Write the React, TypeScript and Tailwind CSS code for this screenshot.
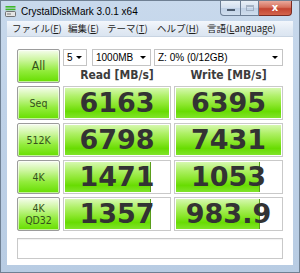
import React from 'react';

const cellFill =
  'bg-[linear-gradient(180deg,#d6f8b0_0%,#aef066_28%,#8ce72e_55%,#68dc02_78%,#80e42a_100%)]';
const btnFill =
  'bg-[linear-gradient(180deg,#f6fdee_0%,#cdf6a0_30%,#92ec3c_65%,#66de00_100%)]';

function Label({ children }: { children: React.ReactNode }) {
  return (
    <div
      className={`${btnFill} border border-[#9c9c9c] rounded-[2px] shadow-[inset_0_0_0_1px_rgba(255,255,255,0.6)] flex flex-col items-center justify-center text-[#35501c] text-[10.5px] leading-[12px] font-['DejaVu_Sans_Condensed','DejaVu_Sans',sans-serif]`}
    >
      {children}
    </div>
  );
}

function Cell({ value, pct }: { value: string; pct: number }) {
  return (
    <div className="relative border border-[#c9c9c9] bg-white p-px">
      <div className="relative h-full w-full">
        <div
          className={`absolute left-0 top-0 h-full ${cellFill} ${pct < 100 ? 'border-r border-[#5a9e1c]' : ''}`}
          style={{ width: `${pct}%` }}
        />
        <div className="relative h-full flex items-center justify-center text-[27px] font-bold text-[#333333] font-['DejaVu_Sans',sans-serif]">
          {value}
        </div>
      </div>
    </div>
  );
}

function Select({ text, w }: { text: string; w: string }) {
  return (
    <div
      className={`${w} h-[17px] border border-[#c4c4c4] bg-white flex items-center justify-between pl-[3px] pr-[4px] text-[10px] text-black font-['Liberation_Sans',sans-serif]`}
    >
      <span>{text}</span>
      <span className="w-0 h-0 border-l-[3px] border-r-[3px] border-t-[3px] border-l-transparent border-r-transparent border-t-black" />
    </div>
  );
}

function Menu({ jp, key1, rest, w }: { jp: string; key1: string; rest?: string; w: string }) {
  return (
    <span className={`${w} inline-block whitespace-nowrap`}>
      {jp}(<span className="underline">{key1}</span>
      {rest ?? ''})
    </span>
  );
}

export default function App() {
  const rows = [
    { label: <>Seq</>, read: '6163', rp: 100, write: '6395', wp: 100 },
    { label: <>512K</>, read: '6798', rp: 100, write: '7431', wp: 100 },
    { label: <>4K</>, read: '1471', rp: 83, write: '1053', wp: 80 },
    {
      label: (
        <>
          <span>4K</span>
          <span>QD32</span>
        </>
      ),
      read: '1357',
      rp: 83,
      write: '983.9',
      wp: 80,
    },
  ];

  return (
    <div className="w-[300px] h-[273px] flex flex-col bg-[linear-gradient(180deg,#c8d9ec_0%,#bfd2e8_40%,#b8cce3_100%)] border border-[#6f8093] overflow-hidden font-['Liberation_Sans',sans-serif]">
      {/* title bar */}
      <div className="h-[20px] flex items-start shrink-0">
        <svg width="11" height="11" viewBox="0 0 11 11" className="ml-[4px] mt-[5px]">
          <rect x="0.5" y="0" width="10" height="1.6" fill="#3fb82a" />
          <rect x="0.5" y="2.6" width="10" height="1.6" fill="#3fb82a" />
          <rect x="0.5" y="5.5" width="10" height="5" rx="1" fill="#e4e4e4" stroke="#555" strokeWidth="0.8" />
          <rect x="2" y="7.5" width="4" height="1" fill="#777" />
        </svg>
        <span className="ml-[5px] mt-[5px] text-[10px] leading-[12px] text-black">
          CrystalDiskMark 3.0.1 x64
        </span>
        <div className="flex-1" />
        <div className="flex mr-[7px] h-[15px]">
          <div className="w-[21px] h-full border border-[#6d7f96] border-t-0 rounded-bl-[4px] bg-[linear-gradient(180deg,#e9f0f8_0%,#d3dfee_50%,#bfd0e5_51%,#d0deee_100%)] flex items-center justify-center">
            <div className="w-[8px] h-[2px] mt-[4px] bg-white border border-[#4c5b6e]" />
          </div>
          <div className="w-[18px] h-full border-y border-r border-[#6d7f96] border-t-0 bg-[linear-gradient(180deg,#e9f0f8_0%,#d3dfee_50%,#bfd0e5_51%,#d0deee_100%)] flex items-center justify-center">
            <div className="w-[8px] h-[6px] border border-[#8392a6] border-t-2 bg-transparent opacity-60" />
          </div>
          <div className="w-[33px] h-full border-y border-r border-[#7a2b22] border-t-0 rounded-br-[4px] bg-[linear-gradient(180deg,#e9a99c_0%,#d66f5b_45%,#c34431_55%,#d4654c_100%)] flex items-center justify-center text-white text-[10px] font-bold leading-none font-['DejaVu_Sans',sans-serif]">
            x
          </div>
        </div>
      </div>

      {/* menu bar */}
      <div className="mx-[6px] h-[16px] shrink-0 bg-[linear-gradient(180deg,#f3f7fc_0%,#e2eaf4_60%,#dbe5f1_100%)] border-b border-[#c8d4e2] flex items-center pl-[5px] text-[9.5px] text-[#1e1e1e] font-['Noto_Sans_CJK_JP',sans-serif] leading-none">
        <Menu jp="ファイル" key1="F" w="w-[56px]" />
        <Menu jp="編集" key1="E" w="w-[39px]" />
        <Menu jp="テーマ" key1="T" w="w-[50px]" />
        <Menu jp="ヘルプ" key1="H" w="w-[50px]" />
        <Menu jp="言語" key1="L" rest="anguage" w="w-auto" />
      </div>

      {/* client */}
      <div className="mx-[6px] mb-[7px] flex-1 bg-white pl-[10px] pt-[12px]">
        <div className="grid grid-cols-[43px_108px_109px] grid-rows-[34px_34px_34px_34px_34px] gap-[3px]">
          <div className={`${btnFill} border border-[#9c9c9c] rounded-[2px] shadow-[inset_0_0_0_1px_rgba(255,255,255,0.6)] flex items-center justify-center text-[#35501c] text-[12px] font-['DejaVu_Sans_Condensed','DejaVu_Sans',sans-serif]`}>
            All
          </div>
          <div className="col-span-2 flex flex-col">
            <div className="flex">
              <Select text="5" w="w-[24px]" />
              <Select text="1000MB" w="w-[59px] ml-[5px]" />
              <Select text="Z: 0% (0/12GB)" w="w-[129px] ml-[3px]" />
            </div>
            <div className="flex flex-1 items-center text-[12px] font-bold text-[#3c3c3c] font-['DejaVu_Sans_Condensed','DejaVu_Sans',sans-serif]">
              <div className="w-[108px] text-center">Read [MB/s]</div>
              <div className="w-[109px] ml-[3px] text-center">Write [MB/s]</div>
            </div>
          </div>
          {rows.map((r, i) => (
            <React.Fragment key={i}>
              <Label>{r.label}</Label>
              <Cell value={r.read} pct={r.rp} />
              <Cell value={r.write} pct={r.wp} />
            </React.Fragment>
          ))}
        </div>
        <div className="mt-[7px] w-[266px] h-[21px] border border-[#c9c9c9] bg-white shadow-[inset_0_1px_1px_rgba(0,0,0,0.06)]" />
      </div>
    </div>
  );
}
